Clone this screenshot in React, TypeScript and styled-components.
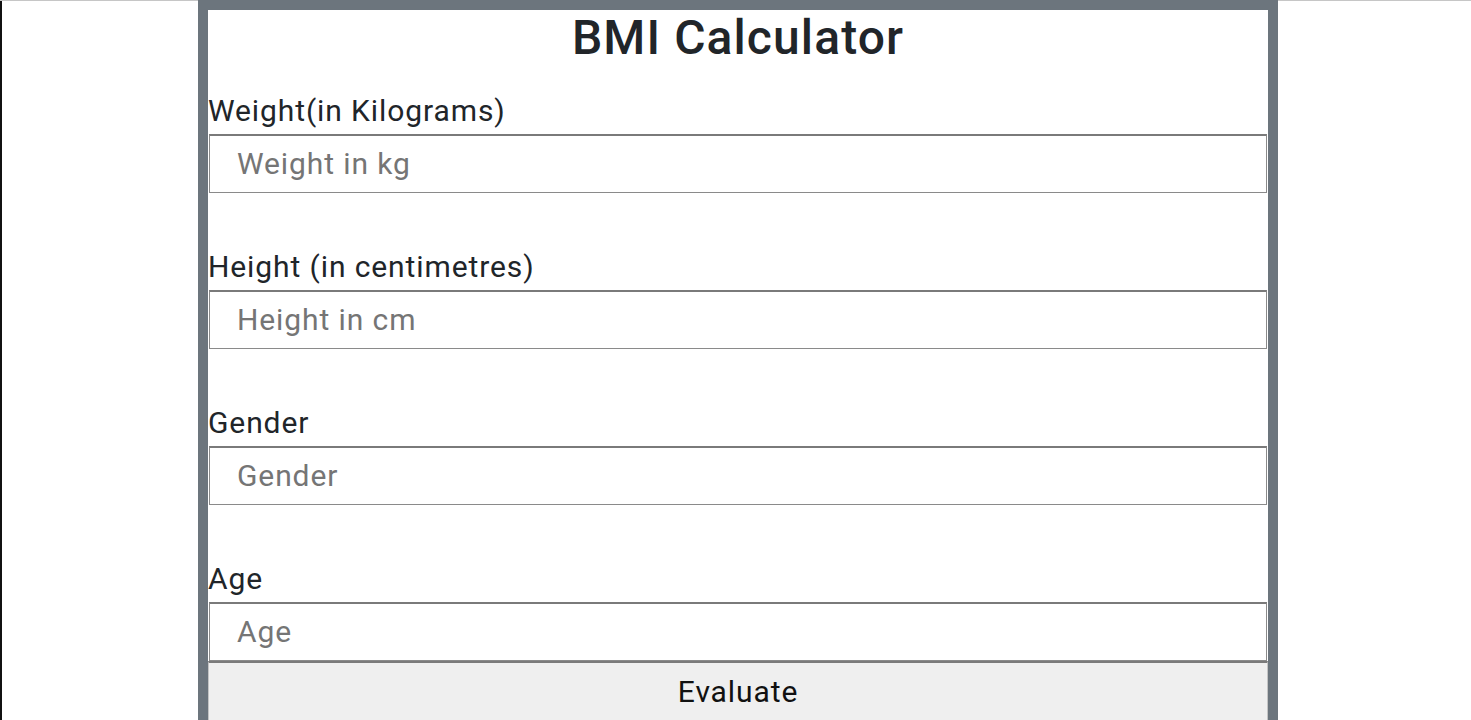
import React from "react";
import styled, { createGlobalStyle } from "styled-components";

const GlobalStyle = createGlobalStyle`
  html, body {
    margin: 0;
    padding: 0;
    background: #fff;
  }
  body {
    font-family: Roboto, "Noto Sans", "Liberation Sans", sans-serif;
    color: #212529;
    overflow: hidden;
  }
  * {
    box-sizing: border-box;
  }
`;

const Page = styled.div`
  min-height: 100vh;
  display: flex;
  justify-content: center;
  padding-left: 5px;
  box-shadow: inset 0 1px 0 #c6c6c6, inset 2px 0 0 #111;
`;

const Card = styled.div`
  width: 1080px;
  background: #fff;
  border: 10px solid #6c757d;
  border-bottom: none;
  display: flex;
  flex-direction: column;
`;

const Title = styled.h1`
  margin: 0 0 30px;
  font-size: 48px;
  line-height: 56px;
  font-weight: 500;
  letter-spacing: 1.1px;
  text-align: center;
  color: #212529;
`;

const Field = styled.div<{ last?: boolean }>`
  display: flex;
  flex-direction: column;
  margin-bottom: ${(props) => (props.last ? "0" : "59px")};
`;

const Label = styled.label`
  font-size: 30px;
  line-height: 33px;
  letter-spacing: 0.9px;
  margin-top: -2px;
  margin-bottom: 7px;
  color: #212529;
`;

const Input = styled.input`
  height: 59px;
  margin: 0 1px;
  padding: 0 27px 1px;
  border: 1px solid #8a8a8a;
  border-top: 2px solid #7a7a7a;
  border-bottom-width: 1px;
  font-family: Roboto, "Noto Sans", sans-serif;
  font-size: 30px;
  letter-spacing: 0.9px;
  color: #212529;
  outline: none;
  background: #fff;

  &::placeholder {
    color: #757575;
  }
`;

const Button = styled.button`
  height: 59px;
  margin: 0;
  border: 1px solid #c4c4c4;
  border-top: 2px solid #7a7a7a;
  border-bottom: none;
  border-radius: 0;
  background: #efefef;
  font-family: Roboto, "Noto Sans", sans-serif;
  font-size: 30px;
  letter-spacing: 0.9px;
  color: #111;
  padding-bottom: 2px;
  cursor: pointer;
`;

const fields = [
  { label: "Weight(in Kilograms)", placeholder: "Weight in kg" },
  { label: "Height (in centimetres)", placeholder: "Height in cm" },
  { label: "Gender", placeholder: "Gender" },
  { label: "Age", placeholder: "Age" },
];

const App: React.FC = () => {
  return (
    <>
      <GlobalStyle />
      <Page>
        <Card>
          <Title>BMI Calculator</Title>
          {fields.map((f, i) => (
            <Field key={f.label} last={i === fields.length - 1}>
              <Label>{f.label}</Label>
              <Input type="text" placeholder={f.placeholder} />
            </Field>
          ))}
          <Button>Evaluate</Button>
        </Card>
      </Page>
    </>
  );
};

export default App;
